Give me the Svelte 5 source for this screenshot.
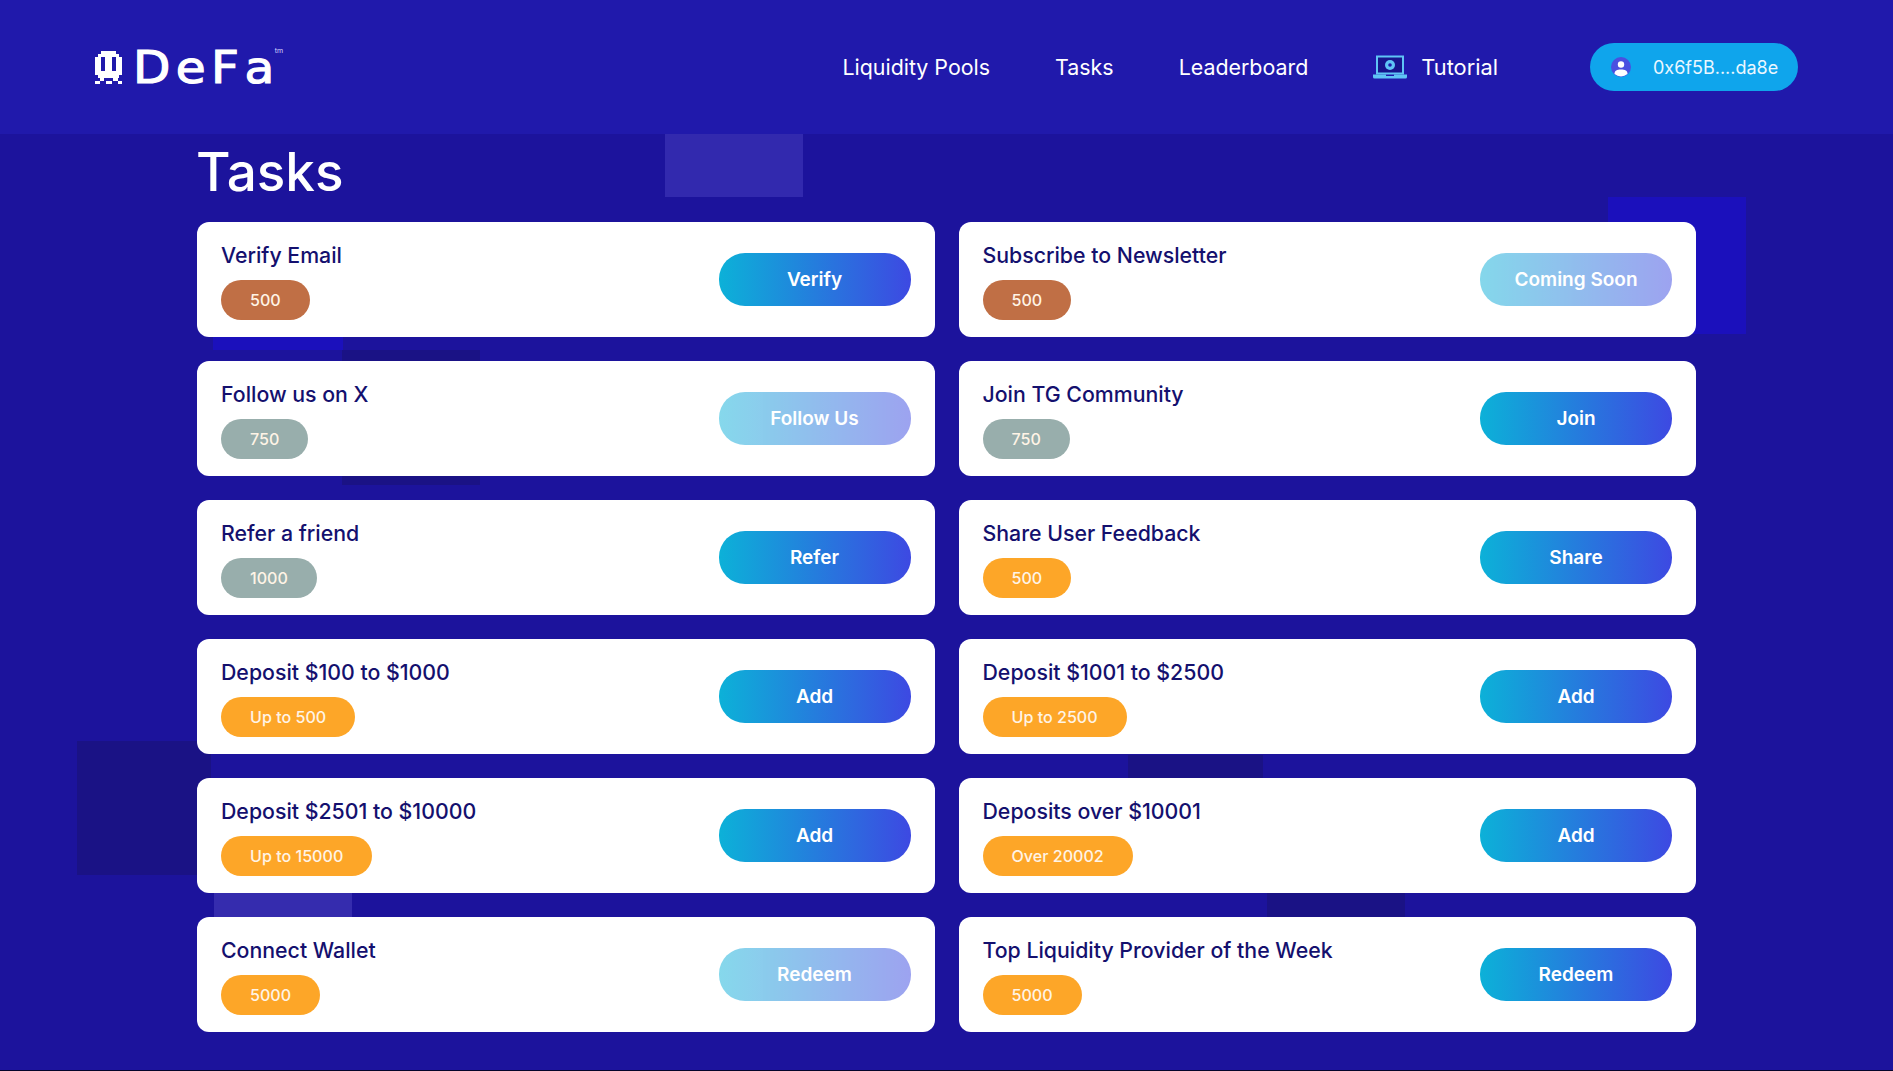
<script>
  const tasks = [
    { title: 'Verify Email', badge: '500', tone: 'bronze', action: 'Verify' },
    { title: 'Subscribe to Newsletter', badge: '500', tone: 'bronze', action: 'Coming Soon', off: true },
    { title: 'Follow us on X', badge: '750', tone: 'silver', action: 'Follow Us', off: true },
    { title: 'Join TG Community', badge: '750', tone: 'silver', action: 'Join' },
    { title: 'Refer a friend', badge: '1000', tone: 'silver', action: 'Refer' },
    { title: 'Share User Feedback', badge: '500', tone: 'gold', action: 'Share' },
    { title: 'Deposit $100 to $1000', badge: 'Up to 500', tone: 'gold', action: 'Add' },
    { title: 'Deposit $1001 to $2500', badge: 'Up to 2500', tone: 'gold', action: 'Add' },
    { title: 'Deposit $2501 to $10000', badge: 'Up to 15000', tone: 'gold', action: 'Add' },
    { title: 'Deposits over $10001', badge: 'Over 20002', tone: 'gold', action: 'Add' },
    { title: 'Connect Wallet', badge: '5000', tone: 'gold', action: 'Redeem', off: true },
    { title: 'Top Liquidity Provider of the Week', badge: '5000', tone: 'gold', action: 'Redeem' }
  ];
</script>

<div class="page">
  <header class="top">
    <a class="logo" href="#home">
      <svg class="skull" viewBox="0 0 9 11" width="27" height="33" aria-hidden="true">
        <path fill="#fff" d="M2 0h5v1h1v1h1v6H8v1H1V8H0V2h1V1h1z" />
        <path fill="#2019ab" d="M2 2h1.300v4.500H2zM5.700 2H7v4.500H5.700z" />
        <path fill="#fff" d="M0 10h1.500v1H0zM3.500 10h2v1h-2zM7.500 10H9v1H7.500zM1.500 9H3v1H1.500zM6 9h1.500v1H6z" />
      </svg>
      <span class="word">DeF<span class="last">a</span></span><span class="tm">tm</span>
    </a>
    <nav class="nav">
      <a href="#pools">Liquidity Pools</a>
      <a href="#tasks">Tasks</a>
      <a href="#board">Leaderboard</a>
      <a class="tut" href="#tutorial">
        <svg viewBox="0 0 34 24" width="34" height="24" aria-hidden="true">
          <path fill="#17148c" stroke="#5fc4f5" stroke-width="2" d="M4 1.500h26v17H4z" />
          <circle cx="17" cy="10" r="5" fill="#5fc4f5" />
          <circle cx="17" cy="10" r="1.800" fill="#2019ab" />
          <path fill="#5fc4f5" d="M0 19.500h13v1.500h8v-1.500h13v2.500a1.500 1.500 0 0 1-1.500 1.500H1.500A1.500 1.500 0 0 1 0 22z" />
        </svg>
        <span class="tut-label">Tutorial</span>
      </a>
    </nav>
    <button class="wallet">
      <svg viewBox="0 0 20 20" width="20" height="20" aria-hidden="true">
        <circle cx="10" cy="10" r="10" fill="#4a50e0" />
        <circle cx="10" cy="7.500" r="3.200" fill="#fff" />
        <path fill="#fff" d="M3.500 17c0-3.500 2.500-4.500 6.500-4.500s6.500 1 6.500 4.500a10 10 0 0 1-13 0z" />
      </svg>
      0x6f5B....da8e
    </button>
  </header>

  <main class="main">
    <h1>Tasks</h1>
    <div class="grid">
      {#each tasks as t}
        <section class="card">
          <div class="info">
            <h2>{t.title}</h2>
            <span class="badge {t.tone}">{t.badge}</span>
          </div>
          <button class="action" class:off={t.off}>{t.action}</button>
        </section>
      {/each}
    </div>
  </main>
</div>

<style>
  :global(body) {
    margin: 0;
    background: #05052a;
  }
  .page {
    height: 1070px;
    overflow: hidden;
    font-family: Inter, "Liberation Sans", sans-serif;
    background-color: #1c139c;
    background-image:
      linear-gradient(#3229ae, #3229ae),
      linear-gradient(#1b10bc, #1b10bc),
      linear-gradient(#1b10bc, #1b10bc),
      linear-gradient(#1a1285, #1a1285),
      linear-gradient(#1a1285, #1a1285),
      linear-gradient(#1a1285, #1a1285),
      linear-gradient(#1a1285, #1a1285),
      linear-gradient(#352cae, #352cae);
    background-repeat: no-repeat;
    background-position:
      665px 134px,
      1608px 197px,
      213px 222px,
      342px 350px,
      77px 741px,
      1128px 755px,
      1267px 780px,
      214px 780px;
    background-size:
      138px 63px,
      138px 137px,
      130px 128px,
      138px 135px,
      134px 134px,
      135px 24px,
      138px 137px,
      138px 137px;
  }
  .top {
    height: 134px;
    box-sizing: border-box;
    background: #2019ab;
    display: flex;
    align-items: center;
    padding: 0 95px;
  }
  .logo {
    display: flex;
    align-items: center;
    color: #fff;
    text-decoration: none;
  }
  .skull {
    margin-right: 11px;
    shape-rendering: crispEdges;
  }
  .word {
    font-family: "DejaVu Sans", sans-serif;
    font-size: 45px;
    line-height: 1;
    letter-spacing: 5px;
    -webkit-text-stroke: 1.2px #fff;
    transform: scaleX(1.08);
    transform-origin: left center;
  }
  .last {
    letter-spacing: 0;
  }
  .tm {
    font-size: 7px;
    line-height: 8px;
    color: #d8d8ff;
    align-self: flex-start;
    margin: 2px 0 0 11px;
  }
  .nav {
    margin-left: auto;
    display: flex;
    align-items: center;
    gap: 65px;
  }
  .nav a {
    color: #fff;
    font-size: 21.4px;
    text-decoration: none;
  }
  .nav .tut {
    display: flex;
    align-items: center;
    gap: 14px;
  }
  .tut-label {
    font-size: 21.8px;
  }
  .wallet {
    margin-left: 92px;
    width: 208px;
    height: 48px;
    border: 0;
    border-radius: 24px;
    background: #0fa5ec;
    color: #eaf7ff;
    font: 400 18px Inter, "Liberation Sans", sans-serif;
    display: flex;
    align-items: center;
    gap: 22px;
    padding: 0 0 0 21px;
    white-space: nowrap;
  }
  .main {
    width: 1500px;
    margin-left: 197px;
  }
  h1 {
    margin: 0 0 0 -1px;
    height: 88px;
    color: #fff;
    font-size: 53px;
    font-weight: 500;
    line-height: 77px;
  }
  .grid {
    display: grid;
    grid-template-columns: repeat(2, 737.5px);
    gap: 24px;
  }
  .card {
    height: 115px;
    box-sizing: border-box;
    background: #fff;
    border-radius: 12px;
    padding: 0 24px;
    display: flex;
    align-items: center;
    justify-content: space-between;
  }
  .info {
    display: flex;
    flex-direction: column;
    align-items: flex-start;
    align-self: flex-start;
    padding-top: 18.500px;
  }
  h2 {
    margin: 0 0 11.500px;
    color: #14106e;
    font-size: 21.3px;
    font-weight: 500;
    line-height: 28px;
  }
  .badge {
    height: 40px;
    box-sizing: border-box;
    padding: 0 29px;
    border-radius: 20px;
    color: #fff4e6;
    font-size: 16.1px;
    font-weight: 500;
    line-height: 41px;
    text-align: center;
  }
  .bronze { background: #c06f45; }
  .silver { background: #98aeac; }
  .gold { background: #fda628; }
  .action {
    width: 192px;
    height: 53px;
    border: 0;
    border-radius: 26px;
    background: linear-gradient(90deg, #0cb1d8, #3d49e2);
    color: #fff;
    font: 600 19px Inter, "Liberation Sans", sans-serif;
  }
  .action.off {
    opacity: 0.5;
  }
</style>
